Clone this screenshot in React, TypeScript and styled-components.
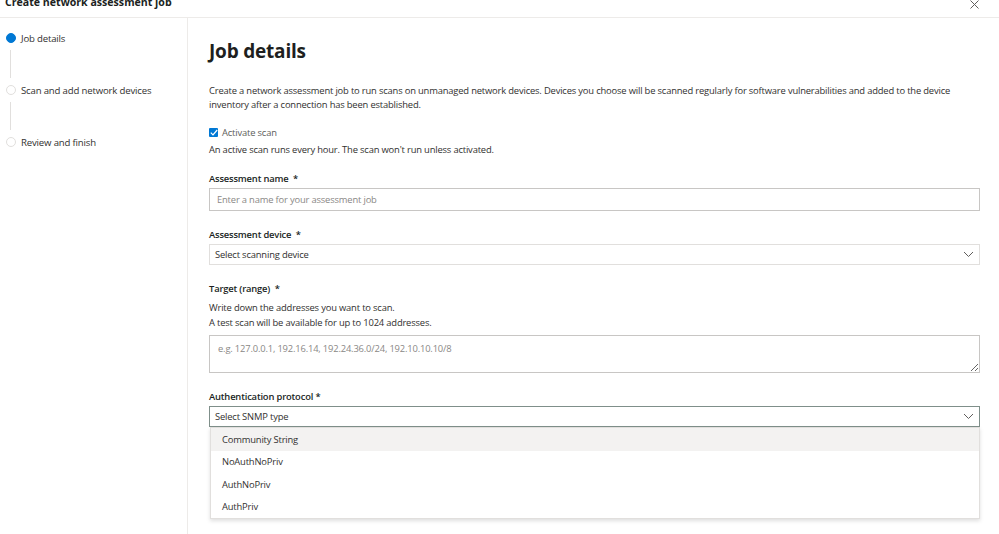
import styled, { createGlobalStyle } from "styled-components"

const GlobalStyle = createGlobalStyle`
  html, body {
    margin: 0;
    padding: 0;
    background: #fff;
    font-family: "Open Sans", "Noto Sans", sans-serif;
    color: #323130;
  }
  * { box-sizing: border-box; }
`

const steps = [
  { label: "Job details", active: true },
  { label: "Scan and add network devices", active: false },
  { label: "Review and finish", active: false },
]

const options = ["Community String", "NoAuthNoPriv", "AuthNoPriv", "AuthPriv"]

const Chevron = () => (
  <svg width="11" height="7" viewBox="0 0 11 7" fill="none">
    <path d="M1 1l4.5 4.5L10 1" stroke="#605e5c" strokeWidth="1" />
  </svg>
)

export const App = () => {
  return (
    <Page>
      <GlobalStyle />
      <Header>
        <Title>Create network assessment job</Title>
        <CloseBtn>
          <svg width="9" height="9" viewBox="0 0 9 9">
            <path d="M0.5 0.5l8 8M8.5 0.5l-8 8" stroke="#605e5c" strokeWidth="1" />
          </svg>
        </CloseBtn>
      </Header>
      <Body>
        <Sidebar>
          {steps.map((s, i) => (
            <Step key={s.label}>
              <StepRow>
                <Dot active={s.active} />
                <StepLabel>{s.label}</StepLabel>
              </StepRow>
              {i < steps.length - 1 && <Connector />}
            </Step>
          ))}
        </Sidebar>
        <Main>
          <H1>Job details</H1>
          <Desc>
            Create a network assessment job to run scans on unmanaged network devices. Devices you choose will be scanned regularly for software vulnerabilities and added to the device inventory after a connection has been established.
          </Desc>
          <CheckRow>
            <CheckBox>
              <svg width="8" height="7" viewBox="0 0 8 7">
                <path d="M0.8 3.6l2.2 2.2L7.2 1" stroke="#fff" strokeWidth="1.2" fill="none" />
              </svg>
            </CheckBox>
            <CheckLabel>Activate scan</CheckLabel>
          </CheckRow>
          <Hint>An active scan runs every hour. The scan won't run unless activated.</Hint>

          <Field $top={15}>
            <Label>Assessment name&nbsp; *</Label>
            <Input placeholder="Enter a name for your assessment job" />
          </Field>

          <Field>
            <Label>Assessment device&nbsp; *</Label>
            <Select>
              <span>Select scanning device</span>
              <Chevron />
            </Select>
          </Field>

          <Field>
            <Label>Target (range)&nbsp; *</Label>
            <SubText>
              Write down the addresses you want to scan.
              <br />
              A test scan will be available for up to 1024 addresses.
            </SubText>
            <TextArea placeholder="e.g. 127.0.0.1, 192.16.14, 192.24.36.0/24, 192.10.10.10/8" />
          </Field>

          <Field>
            <Label>Authentication protocol *</Label>
            <DropWrap>
              <Select focused>
                <span>Select SNMP type</span>
                <Chevron />
              </Select>
              <Menu>
                {options.map((o, i) => (
                  <MenuItem key={o} hovered={i === 0}>{o}</MenuItem>
                ))}
              </Menu>
            </DropWrap>
          </Field>
        </Main>
      </Body>
    </Page>
  )
}
export default App

const Page = styled.div`
  width: 999px;
  height: 534px;
  display: flex;
  flex-direction: column;
  overflow: hidden;
  font-size: 9.4px;
  letter-spacing: -0.17px;
`
const Header = styled.header`
  height: 18px;
  flex-shrink: 0;
  display: flex;
  justify-content: space-between;
  align-items: flex-start;
  border-bottom: 1px solid #edebe9;
  padding: 0 20px 0 5px;
  overflow: hidden;
`
const Title = styled.div`
  font-size: 10.6px;
  font-weight: 700;
  line-height: 14px;
  margin-top: -5px;
  color: #201f1e;
  letter-spacing: 0;
`
const CloseBtn = styled.div`
  display: flex;
`
const Body = styled.div`
  flex: 1;
  display: flex;
  min-height: 0;
`
const Sidebar = styled.nav`
  width: 188px;
  flex-shrink: 0;
  border-right: 1px solid #edebe9;
  padding: 14px 0 0 6px;
  display: flex;
  flex-direction: column;
`
const Step = styled.div`
  display: flex;
  flex-direction: column;
`
const StepRow = styled.div`
  display: flex;
  align-items: center;
  gap: 5px;
  height: 12px;
`
const Dot = styled.span<{ active: boolean }>`
  width: 10px;
  height: 10px;
  border-radius: 50%;
  flex-shrink: 0;
  background: ${(p) => (p.active ? "#0078d4" : "#fff")};
  border: 1px solid ${(p) => (p.active ? "#0078d4" : "#e1dfdd")};
`
const StepLabel = styled.span`
  font-size: 9.6px;
  color: #323130;
  white-space: nowrap;
`
const Connector = styled.div`
  width: 1px;
  height: 28px;
  background: #e1dfdd;
  margin: 6px 0 6px 4px;
`
const Main = styled.main`
  flex: 1;
  padding: 19px 19px 0 21px;
  display: flex;
  flex-direction: column;
`
const H1 = styled.h1`
  margin: 0;
  font-size: 19px;
  font-weight: 700;
  line-height: 28px;
  color: #201f1e;
  letter-spacing: -0.2px;
`
const Desc = styled.p`
  margin: 19px 0 0;
  line-height: 14px;
  color: #323130;
`
const CheckRow = styled.div`
  display: flex;
  align-items: center;
  gap: 4px;
  margin-top: 14px;
  height: 12px;
`
const CheckBox = styled.span`
  width: 9px;
  height: 9px;
  background: #0078d4;
  display: flex;
  align-items: center;
  justify-content: center;
  border-radius: 1px;
`
const CheckLabel = styled.span`
  color: #605e5c;
`
const Hint = styled.div`
  line-height: 14px;
  margin-top: 5px;
  color: #323130;
`
const Field = styled.div<{ $top?: number }>`
  display: flex;
  flex-direction: column;
  margin-top: ${(p) => p.$top ?? 17}px;
`
const Label = styled.label`
  font-weight: 600;
  line-height: 14px;
  color: #201f1e;
  margin-bottom: 2px;
`
const Input = styled.input`
  height: 23px;
  border: 1px solid #c8c6c4;
  padding: 0 7px;
  font-family: inherit;
  font-size: inherit;
  letter-spacing: inherit;
  outline: none;
  &::placeholder { color: #8a8886; }
`
const Select = styled.div<{ focused?: boolean }>`
  height: 21px;
  border: 1px solid ${(p) => (p.focused ? "#7f8f8a" : "#e1dfdd")};
  display: flex;
  align-items: center;
  justify-content: space-between;
  padding: 0 5px;
  color: #323130;
`
const SubText = styled.div`
  line-height: 15px;
  color: #323130;
  margin: 2px 0 5px;
`
const TextArea = styled.textarea`
  height: 38px;
  border: 1px solid #c8c6c4;
  padding: 6px 8px;
  font-family: inherit;
  font-size: inherit;
  letter-spacing: inherit;
  resize: vertical;
  outline: none;
  &::placeholder { color: #8a8886; }
`
const DropWrap = styled.div`
  position: relative;
  display: flex;
  flex-direction: column;
`
const Menu = styled.div`
  position: absolute;
  top: 21px;
  left: 1px;
  right: 0;
  background: #fff;
  border: 1px solid #e1dfdd;
  box-shadow: 0 2px 4px rgba(0, 0, 0, 0.13);
  display: flex;
  flex-direction: column;
`
const MenuItem = styled.div<{ hovered: boolean }>`
  height: 22.5px;
  display: flex;
  align-items: center;
  padding-left: 11px;
  color: #323130;
  background: ${(p) => (p.hovered ? "#f3f2f1" : "#fff")};
`
